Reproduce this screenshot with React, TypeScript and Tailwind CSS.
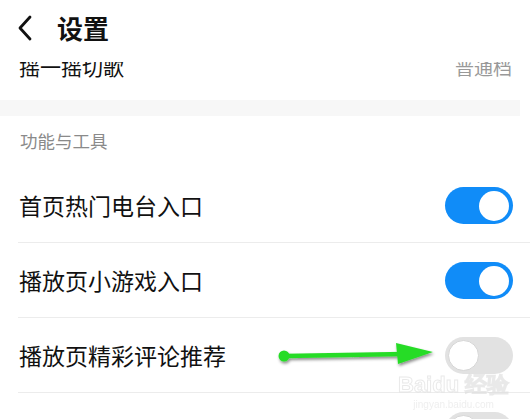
import React from "react";

const font = { fontFamily: '"Noto Sans CJK SC", "Noto Sans", sans-serif' };

function Toggle({ on }: { on: boolean }) {
  return on ? (
    <div className="w-[68px] h-[37px] rounded-full bg-[#108cf8] flex items-center justify-end pr-[4px]">
      <div className="w-[30px] h-[30px] rounded-full bg-white" />
    </div>
  ) : (
    <div className="w-[68px] h-[37px] rounded-full bg-[#e2e2e2] flex items-center justify-start pl-[3px]">
      <div className="w-[31px] h-[31px] rounded-full bg-white border border-[#d6d6d6]" />
    </div>
  );
}

function Row({ label, on, divider = true }: { label: string; on: boolean; divider?: boolean }) {
  return (
    <div className="relative h-[75px] flex items-center justify-between pl-[19px] pr-[17px]">
      <span className="text-[23px] text-[#111] leading-none">{label}</span>
      <Toggle on={on} />
      {divider && <div className="absolute left-[18px] right-0 bottom-0 h-px bg-[#ececec]" />}
    </div>
  );
}

export default function App() {
  return (
    <div className="relative w-[530px] h-[419px] overflow-hidden bg-white" style={font}>
      <div className="h-[62px] flex items-center pb-[6px] relative z-10 bg-white">
        <svg width="16" height="26" viewBox="0 0 16 26" className="ml-[17px]">
          <path d="M13 2 L3 13 L13 24" fill="none" stroke="#111" strokeWidth="2.8" strokeLinecap="round" strokeLinejoin="round" />
        </svg>
        <span className="ml-[24px] text-[26px] font-bold text-[#111] leading-none -mt-[1px]">设置</span>
      </div>
      <div className="overflow-hidden">
        <div className="-mt-[37px] h-[75px] flex items-center justify-between pl-[19px] pr-[18px] pt-[8px]">
          <span className="text-[21px] text-[#111] leading-none">摇一摇切歌</span>
          <span className="text-[19px] text-[#999] leading-none">普通档</span>
        </div>
        <div className="h-[16px] bg-[#f7f7f7] mr-[10px]" />
        <div className="h-[52px] flex items-center pl-[20px] pb-[2px]">
          <span className="text-[17.5px] text-[#8a8a8a] leading-none">功能与工具</span>
        </div>
        <Row label="首页热门电台入口" on={true} />
        <Row label="播放页小游戏入口" on={true} />
        <Row label="播放页精彩评论推荐" on={false} />
        <Row label="播放页显示歌词" on={false} />
      </div>

      {/* annotation arrow */}
      <svg className="absolute left-[270px] top-[335px]" width="175" height="40" viewBox="0 0 175 40">
        <defs>
          <filter id="sh" x="-10%" y="-50%" width="120%" height="200%">
            <feDropShadow dx="1" dy="2" stdDeviation="1.5" floodColor="#000" floodOpacity="0.45" />
          </filter>
        </defs>
        <g filter="url(#sh)">
          <line x1="14" y1="21" x2="135" y2="19" stroke="#27dc27" strokeWidth="4.5" />
          <circle cx="14" cy="21" r="5.5" fill="#27dc27" />
          <polygon points="126,8 163,17 128,29" fill="#27dc27" />
        </g>
      </svg>

      {/* watermark */}
      <div className="absolute left-[398px] top-[374px] flex flex-col items-center pointer-events-none opacity-60">
        <span className="text-[22px] leading-none text-transparent font-bold" style={{ WebkitTextStroke: "1px #dcdcdc", fontFamily: '"Liberation Sans", sans-serif' }}>
          Baidu 经验
        </span>
        <span className="text-[10px] leading-none mt-[4px] text-[#e4e4e4]" style={{ fontFamily: '"Liberation Sans", sans-serif' }}>
          jingyan.baidu.com
        </span>
      </div>
    </div>
  );
}
